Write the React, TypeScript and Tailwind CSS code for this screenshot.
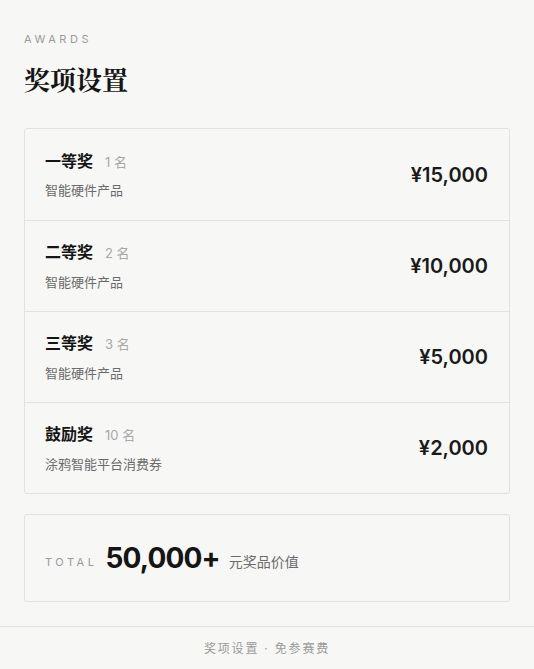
import React from "react";

const rows = [
  { name: "一等奖", count: "1 名", desc: "智能硬件产品", price: "¥15,000" },
  { name: "二等奖", count: "2 名", desc: "智能硬件产品", price: "¥10,000" },
  { name: "三等奖", count: "3 名", desc: "智能硬件产品", price: "¥5,000" },
  { name: "鼓励奖", count: "10 名", desc: "涂鸦智能平台消费券", price: "¥2,000" },
];

const sans = { fontFamily: 'Inter, "Noto Sans CJK SC", sans-serif' };

export default function App() {
  return (
    <div className="min-h-[669px] w-[534px] bg-[#f7f7f5] text-[#1a1a1a]" style={sans}>
      <div className="px-6 pt-[32px]">
        <div className="text-[11px] leading-[14px] tracking-[0.32em] text-[#9a9a9a]">AWARDS</div>
        <h1
          className="mt-[16px] text-[26px] leading-[34px] font-bold text-[#151515]"
          style={{ fontFamily: '"Noto Serif CJK SC", "Noto Serif SC", serif' }}
        >
          奖项设置
        </h1>
        <div className="mt-[32px] rounded-[3px] border border-[#e2e2e0]">
          {rows.map((r, i) => (
            <div
              key={r.name}
              className={`flex h-[91px] items-center justify-between pl-5 pr-[21px] ${i > 0 ? "border-t border-[#e2e2e0]" : ""}`}
            >
              <div className="flex flex-col">
                <div className="flex items-baseline gap-[12px]">
                  <span className="text-[16px] leading-[22px] font-bold text-[#151515]">{r.name}</span>
                  <span className="text-[13px] text-[#a8a8a8]">{r.count}</span>
                </div>
                <div className="mt-[9px] text-[13px] leading-[18px] text-[#6b6b6b]">{r.desc}</div>
              </div>
              <div className="text-[20px] font-semibold text-[#1a1a1a]">{r.price}</div>
            </div>
          ))}
        </div>
        <div className="mt-[20px] flex h-[88px] items-center rounded-[3px] border border-[#e2e2e0] px-5">
          <span className="mt-[8px] text-[11px] tracking-[0.32em] text-[#9a9a9a]">TOTAL</span>
          <span className="ml-[8px] text-[28px] leading-none font-bold tracking-[-0.03em] text-[#151515]">50,000+</span>
          <span className="ml-[9px] mt-[6px] text-[14px] text-[#6b6b6b]">元奖品价值</span>
        </div>
      </div>
      <div className="mt-[24px] border-t border-[#e2e2e0] py-[13px] text-center text-[12px] tracking-[0.15em] text-[#9a9a9a]">
        奖项设置 · 免参赛费
      </div>
    </div>
  );
}
